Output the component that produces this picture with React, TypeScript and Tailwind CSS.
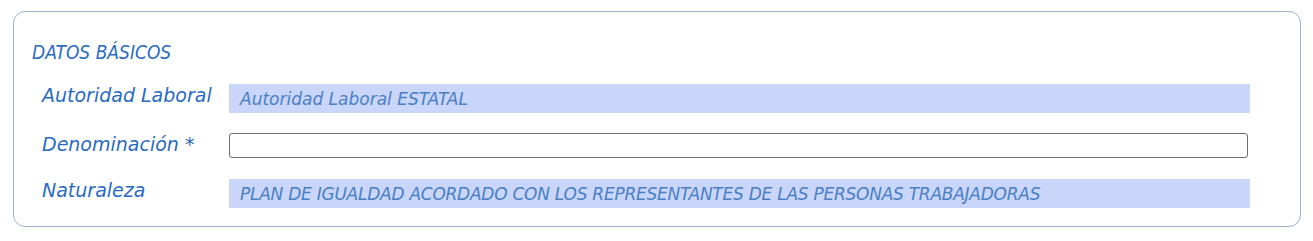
import React from "react";

const font = { fontFamily: '"DejaVu Sans", Verdana, sans-serif' };

export default function App() {
  return (
    <div className="bg-white w-[1313px] h-[241px] pt-[11px] pl-[13px]" style={font}>
      <div className="w-[1288px] h-[216px] border border-[#9db2cc] rounded-[12px] pl-[18px] pr-[50px] pt-[29px]">
        <div className="italic text-[#2a6bbf] text-[19px] leading-[22px] h-[43px] font-['DejaVu_Sans_Condensed','DejaVu_Sans',sans-serif]">DATOS BÁSICOS</div>
        <div className="flex flex-col">
          <div className="flex items-start h-[49px]">
            <div className="w-[197px] pl-[10px] italic text-[#2a6bbf] text-[19px] leading-[22px]">Autoridad Laboral</div>
            <div className="flex-1 h-[29px] bg-[#c9d6f9] pl-[11px] italic text-[#4a7fc4] text-[17px] leading-[29px] pt-[1px]">Autoridad Laboral ESTATAL</div>
          </div>
          <div className="flex items-start h-[46px]">
            <div className="w-[197px] pl-[10px] italic text-[#2a6bbf] text-[19px] leading-[22px]">Denominación *</div>
            <div className="flex-1 mr-[2px] h-[25px] border border-[#6b6b6b] rounded-[3px] bg-white"></div>
          </div>
          <div className="flex items-start h-[29px]">
            <div className="w-[197px] pl-[10px] italic text-[#2a6bbf] text-[19px] leading-[22px]">Naturaleza</div>
            <div className="flex-1 h-[29px] bg-[#c9d6f9] pl-[11px] italic text-[#4a7fc4] text-[17px] tracking-[-0.25px] leading-[29px] pt-[1px]">PLAN DE IGUALDAD ACORDADO CON LOS REPRESENTANTES DE LAS PERSONAS TRABAJADORAS</div>
          </div>
        </div>
      </div>
    </div>
  );
}
